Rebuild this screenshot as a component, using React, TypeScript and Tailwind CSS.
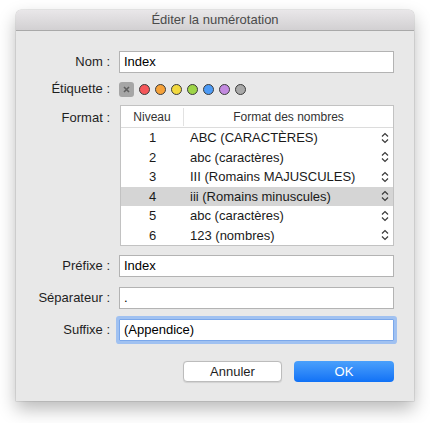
const font = { fontFamily: '"Liberation Sans", Arial, sans-serif' }

const rows = [
  { level: '1', format: 'ABC (CARACTÈRES)' },
  { level: '2', format: 'abc (caractères)' },
  { level: '3', format: 'III (Romains MAJUSCULES)' },
  { level: '4', format: 'iii (Romains minuscules)', selected: true },
  { level: '5', format: 'abc (caractères)' },
  { level: '6', format: '123 (nombres)' },
]

const dots = ['#f5565a', '#f6a23a', '#f2d93f', '#9ed548', '#4d9bf6', '#c38ae0', '#a9a9a9']

function Chevrons() {
  return (
    <svg width="8" height="12" viewBox="0 0 8 12" fill="none" stroke="#3a3a3a" strokeWidth="1.2">
      <path d="M1 4.5 L4 1.5 L7 4.5" />
      <path d="M1 7.5 L4 10.5 L7 7.5" />
    </svg>
  )
}

function Label({ children, className = '' }: { children: React.ReactNode; className?: string }) {
  return <div className={`w-[94px] shrink-0 text-right text-[13px] text-[#1e1e1e] ${className}`}>{children}</div>
}

function Field({ value, focused }: { value: string; focused?: boolean }) {
  return (
    <div
      className={`h-[22px] w-[275px] bg-white px-[4px] text-[13px] leading-[20px] text-black border ${
        focused ? 'border-[#7aa7ea] ring-[3px] ring-[#8db6f2]/80 rounded-[1px]' : 'border-[#b3b3b3]'
      }`}
    >
      {value}
    </div>
  )
}

export default function App() {
  return (
    <div className="min-h-[423px] w-[430px] bg-white pt-[10px] pl-[16px]" style={font}>
      <div className="flex h-[391px] w-[398px] flex-col rounded-t-[5px] bg-[#e8e8e8] shadow-[0_8px_18px_rgba(0,0,0,0.28),0_0_0_0.5px_rgba(0,0,0,0.15)]">
        {/* title bar */}
        <div className="flex h-[21px] items-center justify-center rounded-t-[5px] border-b border-[#a9a9a9] bg-gradient-to-b from-[#e9e7e9] to-[#d2d0d2] text-[13px] text-[#4a4a4a]">
          Éditer la numérotation
        </div>

        <div className="flex flex-col">
          <div className="mt-[20px] flex items-center gap-[9px]">
            <Label>Nom :</Label>
            <Field value="Index" />
          </div>

          <div className="mt-[8px] flex h-[16px] items-center gap-[9px]">
            <Label>Étiquette :</Label>
            <div className="flex items-center gap-[5px]">
              <div className="flex h-[15px] w-[15px] items-center justify-center rounded-[3px] bg-[#a6a6a6]">
                <svg width="7" height="7" viewBox="0 0 7 7" stroke="#5e5e5e" strokeWidth="1.6">
                  <path d="M1 1 L6 6 M6 1 L1 6" />
                </svg>
              </div>
              {dots.map((c) => (
                <div
                  key={c}
                  className="h-[11px] w-[11px] rounded-full border border-[#3c3c3c]"
                  style={{ backgroundColor: c }}
                />
              ))}
            </div>
          </div>

          <div className="mt-[8px] flex items-start gap-[10px]">
            <Label className="pt-[3px]">Format :</Label>
            <div className="h-[141px] w-[274px] border border-[#c2c2c2] bg-white">
              <div className="flex h-[22px] items-center border-b border-[#dcdcdc] text-[12px] text-[#333]">
                <div className="w-[63px] border-r border-[#e2e2e2] text-center">Niveau</div>
                <div className="flex-1 text-center">Format des nombres</div>
              </div>
              {rows.map((r) => (
                <div
                  key={r.level}
                  className={`flex h-[19.5px] items-center text-[13px] text-[#1a1a1a] ${r.selected ? 'bg-[#d5d5d5]' : ''}`}
                >
                  <div className="w-[63px] text-center">{r.level}</div>
                  <div className="flex-1 pl-[6px]">{r.format}</div>
                  <div className="pr-[4px]">
                    <Chevrons />
                  </div>
                </div>
              ))}
            </div>
          </div>

          <div className="mt-[9px] flex items-center gap-[9px]">
            <Label>Préfixe :</Label>
            <Field value="Index" />
          </div>

          <div className="mt-[10px] flex items-center gap-[9px]">
            <Label>Séparateur :</Label>
            <Field value="." />
          </div>

          <div className="mt-[10px] flex items-center gap-[9px]">
            <Label>Suffixe :</Label>
            <Field value="(Appendice)" focused />
          </div>

          <div className="mt-[20px] flex justify-end gap-[12px] pr-[20px]">
            <button className="h-[21px] w-[99px] rounded-[4px] border border-[#bcbcbc] bg-white text-[13px] text-[#1e1e1e] shadow-[0_0.5px_1px_rgba(0,0,0,0.1)]">
              Annuler
            </button>
            <button className="h-[21px] w-[100px] rounded-[4px] bg-gradient-to-b from-[#4aa0fb] to-[#0f71f6] text-[13px] text-white">
              OK
            </button>
          </div>
        </div>
      </div>
    </div>
  )
}
